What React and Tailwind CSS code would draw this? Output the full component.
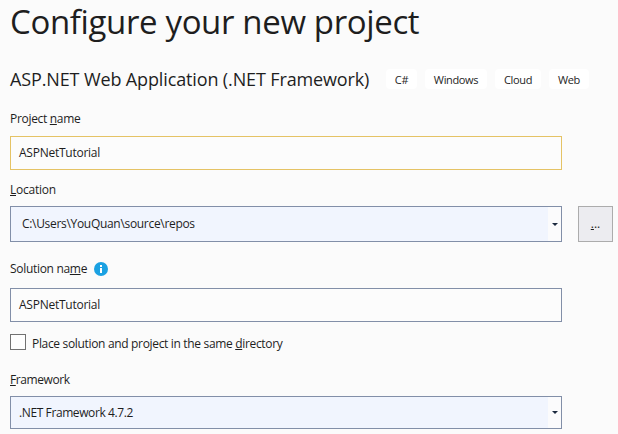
function Key({ children }) {
  return <span className="underline decoration-1 underline-offset-1 [text-decoration-skip-ink:none]">{children}</span>;
}

function Tag({ className, children }) {
  return (
    <span className={`flex h-5 items-center justify-center rounded bg-white pt-0.5 text-[11px] leading-[18px] tracking-[-0.35px] ${className}`}>
      {children}
    </span>
  );
}

function Combo({ className, children }) {
  return (
    <div className={`flex w-[552px] items-stretch border border-[#828fa8] bg-[#f1f5fe] ${className}`}>
      <div className="flex flex-1 items-center">{children}</div>
      <div className="flex w-[13px] items-center justify-center bg-[#fbfbfc]">
        <svg width="6" height="3" viewBox="0 0 6 3" className="block">
          <path d="M0 0H6L3 3Z" fill="#1b293e" />
        </svg>
      </div>
    </div>
  );
}

export default function App() {
  return (
    <main className="h-[434px] w-[618px] bg-[#fbfbfb] pl-2.5 font-['Open_Sans','Noto_Sans',sans-serif] text-[12px] leading-[17px] tracking-[-0.31px] whitespace-pre text-[#1e1e1e]">
      <h1 className="h-[44px] text-[33px] leading-[44px] tracking-[-0.36px]">Configure your new project</h1>

      <div className="mt-[25px] flex h-5 items-center">
        <h2 className="w-[376px] text-[18px] leading-5 tracking-[-0.13px]">ASP.NET Web Application (.NET Framework)</h2>
        <div className="flex gap-2">
          <Tag className="w-[31px]">C#</Tag>
          <Tag className="w-[62px]">Windows</Tag>
          <Tag className="w-[46px]">Cloud</Tag>
          <Tag className="w-[40px]">Web</Tag>
        </div>
      </div>

      <div className="mt-[21px] h-[17px]"><span>Project <Key>n</Key>ame</span></div>
      <div className="mt-[9px] flex h-[34px] w-[552px] items-center border border-[#e5c365] bg-[#fcfcfc] pb-px pl-2">
        <span className="tracking-[-0.25px]">ASPNetTutorial</span>
      </div>

      <div className="mt-[11px] h-[17px]"><span className="tracking-[-0.25px]"><Key>L</Key>ocation</span></div>
      <div className="mt-2 flex gap-4">
        <Combo className="h-9"><span className="pb-px pl-[11px]">C:\Users\YouQuan\source\repos</span></Combo>
        <button className="flex h-9 w-[35px] items-center justify-center border border-[#acacac] bg-[#ececf0] pb-px tracking-normal">
          <span><Key>.</Key>..</span>
        </button>
      </div>

      <div className="mt-[18px] flex h-[17px] items-center">
        <span className="w-[84px]">Solution na<Key>m</Key>e</span>
        <svg width="14" height="14" viewBox="0 0 14 14" className="mt-px">
          <circle cx="7" cy="7" r="7" fill="#1ba1e2" />
          <path d="M6 3H8V5H6ZM6 6H8V11H6Z" fill="#fff" />
        </svg>
      </div>
      <div className="mt-[11px] flex h-[34px] w-[552px] items-center border border-[#828fa8] bg-[#fcfcfc] pb-px pl-2">
        <span className="tracking-[-0.25px]">ASPNetTutorial</span>
      </div>

      <div className="mt-3 flex h-4 items-center gap-1.5">
        <span className="size-4 border border-[#717171] bg-[#fefefe]" />
        <span className="pt-[3px] tracking-[-0.33px]">Place solution and project in the same <Key>d</Key>irectory</span>
      </div>

      <div className="mt-[21px] h-[17px]"><span className="tracking-[-0.4px]"><Key>F</Key>ramework</span></div>
      <Combo className="mt-2 h-[33px]"><span className="pl-2 tracking-[-0.4px]">.NET Framework 4.7.2</span></Combo>
    </main>
  );
}
